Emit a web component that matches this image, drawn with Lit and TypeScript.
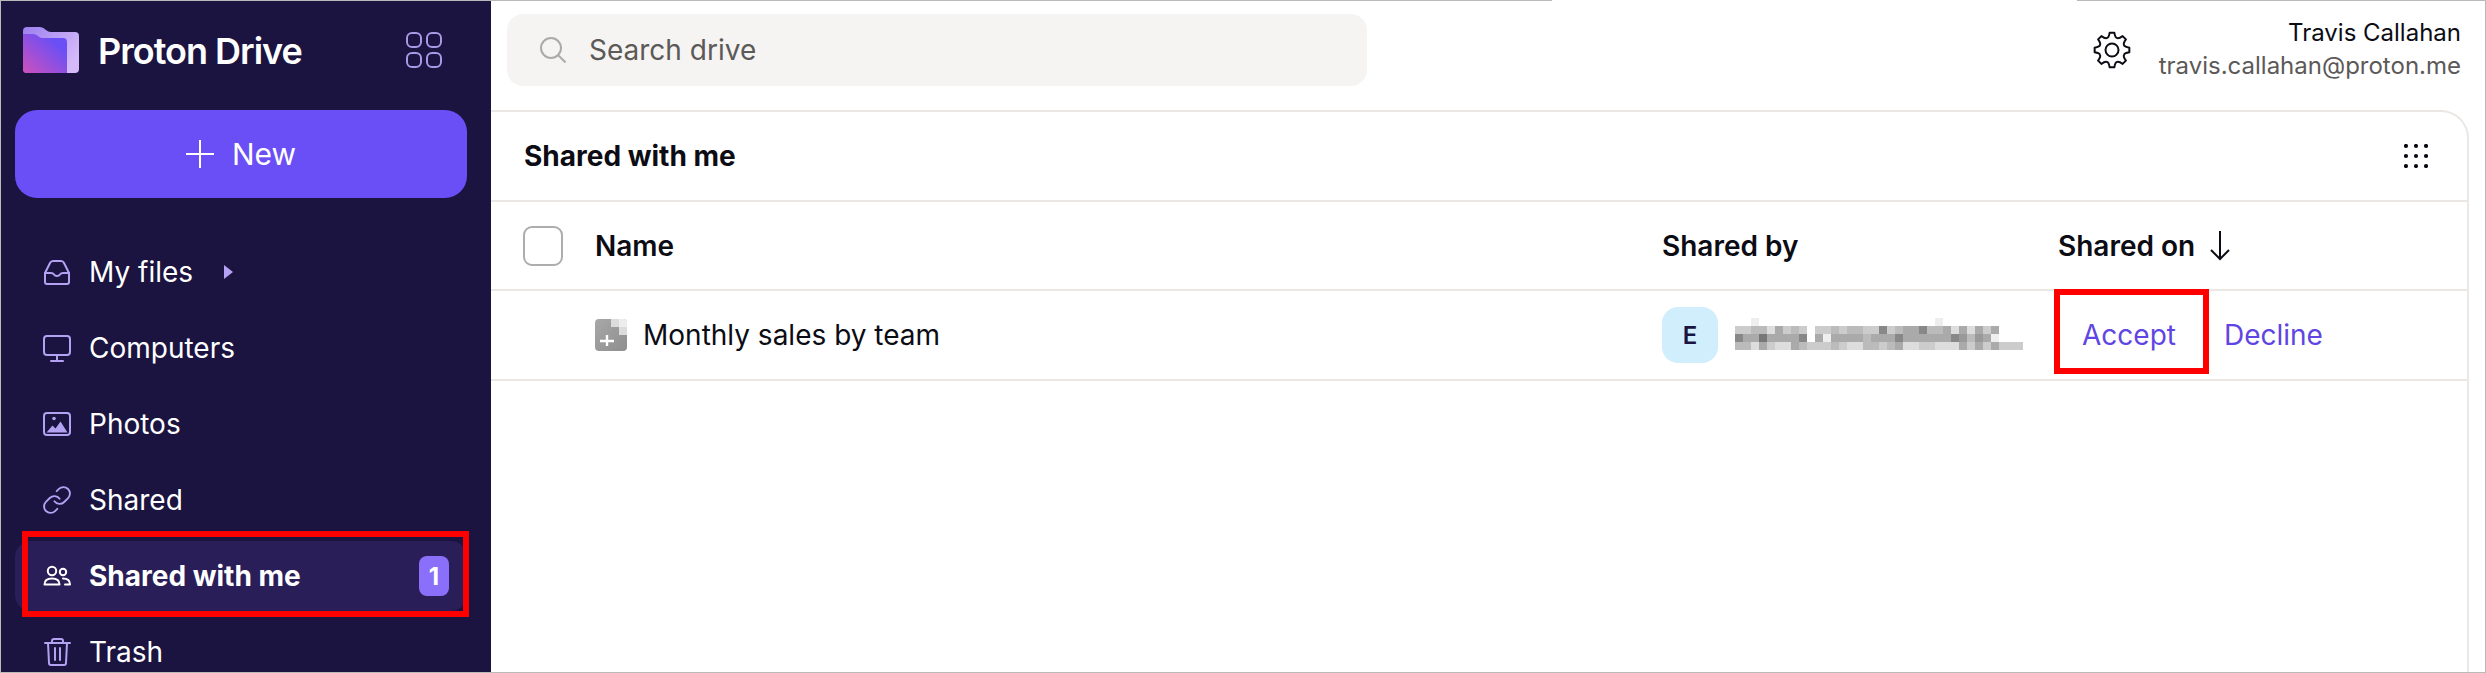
import { LitElement, html, css, svg } from 'lit';
import { customElement } from 'lit/decorators.js';

// grey levels of the pixelated address, one hex digit per 8px cell
const MOSAIC = [
  'ffeffffffffffffffffffffffeffffffffff',
  'ccbbdacbcfccbcbbcc8cbaa8bbadadacafff',
  '8aa7aaaa8faeaaaabaaa8aaaaaa89b9aefff',
  'bbdacddabcccbcddbbcbaddccdddacacaccc',
];

// cog outline, built from polar points so the teeth stay even
function cogPath(cx: number, cy: number, outer: number, inner: number, teeth: number) {
  const pts: string[] = [];
  const step = (Math.PI * 2) / teeth;
  for (let i = 0; i < teeth; i++) {
    const a = i * step - Math.PI / 2;
    const at = (r: number, d: number) =>
      `${(cx + r * Math.cos(a + d * step)).toFixed(2)} ${(cy + r * Math.sin(a + d * step)).toFixed(2)}`;
    pts.push(`${i === 0 ? 'M' : 'L'}${at(outer, -0.17)}`);
    pts.push(`L${at(outer, 0.17)}`);
    pts.push(`Q${at(inner * 0.98, 0.32)} ${at(inner, 0.5)}`);
    pts.push(`Q${at(inner * 0.98, 0.68)} ${at(outer, 0.83)}`);
  }
  return pts.join(' ') + 'Z';
}

const ICONS: Record<string, unknown> = {
  inbox: svg`<path d="M2 15 7 5Q8 3 10 3H18Q20 3 21 5L26 15V24Q26 26 24 26H4Q2 26 2 24Z"/><path d="M2 15H8Q10 15 11 16.5 12 18 14 18 16 18 17 16.5 18 15 20 15H26"/>`,
  monitor: svg`<rect x="1" y="2" width="26" height="19" rx="3"/><path d="M14 21V27M8 27H20"/>`,
  photo: svg`<rect x="1" y="3" width="26" height="22" rx="3"/><circle cx="11" cy="8.5" r="1.8" class="solid"/><path class="solid" d="M3.5 22.5 9.5 15.5 12.5 18.5 17.5 11.5 24.5 22.5Z"/>`,
  link: svg`<g stroke-width="1.45" transform="translate(-1.6 -1.6) scale(1.3)"><path d="M10 13a5 5 0 0 0 7.54.54l3-3a5 5 0 0 0-7.07-7.07l-1.72 1.71"/><path d="M14 11a5 5 0 0 0-7.54-.54l-3 3a5 5 0 0 0 7.07 7.07l1.71-1.71"/></g>`,
  people: svg`<circle cx="9" cy="9" r="4.2"/><circle cx="20" cy="10" r="3.2"/><path d="M1.5 22.5C1.5 18 4.5 16.5 9 16.5S16.5 18 16.5 22.5Z"/><path d="M20 16.5C24 16.5 27 18 27 22.5H22"/>`,
  trash: svg`<path d="M2 5H27M9 5V3Q9 1 11 1H18Q20 1 20 3V5M5 5 6 25Q6 27 8 27H21Q23 27 23 25L24 5M12 10V22M17 10V22"/>`,
};

@customElement('app-root')
export class AppRoot extends LitElement {
  static styles = css`
    :host {
      display: block;
      height: 673px;
      overflow: hidden;
      background: #fff;
      font-family: Inter, 'Liberation Sans', sans-serif;
      color: #0c0c14;
    }
    .topline {
      display: flex;
      height: 1px;
    }
    .topline .seg {
      background: #b9b9b9;
    }
    .topline .left {
      width: 1552px;
    }
    .topline .gap {
      width: 525px;
    }
    .topline .right {
      flex: 1;
    }
    .shell {
      display: flex;
      height: 671px;
      border-left: 1px solid #b9b9b9;
      border-right: 1px solid #b9b9b9;
      border-bottom: 1px solid #b9b9b9;
      overflow: hidden;
    }

    /* sidebar */
    .sidebar {
      width: 490px;
      flex: none;
      background: #1b1340;
      box-sizing: border-box;
      padding: 0 24px 0 14px;
      color: #fff;
    }
    .brand {
      display: flex;
      align-items: center;
      height: 109px;
      padding-left: 8px;
    }
    .logo {
      width: 56px;
      height: 46px;
      flex: none;
      margin-top: -11px;
    }
    .wordmark {
      margin: -9px 0 0 19px;
      font-size: 36px;
      font-weight: 600;
      letter-spacing: -1px;
      line-height: 1;
      white-space: nowrap;
    }
    .apps {
      width: 36px;
      height: 36px;
      margin: -11px 0 0 auto;
      margin-right: 25px;
      fill: none;
      stroke: #a898e6;
      stroke-width: 2;
    }
    .new-btn {
      display: flex;
      align-items: center;
      justify-content: center;
      gap: 18px;
      height: 88px;
      border-radius: 22px;
      background: #6a4ff6;
      font-size: 30px;
    }
    .new-btn svg {
      width: 28px;
      height: 28px;
      stroke: #fff;
      stroke-width: 2;
    }
    .nav {
      display: flex;
      flex-direction: column;
      gap: 6px;
      margin-top: 39px;
    }
    .nav-item {
      position: relative;
      display: flex;
      align-items: center;
      flex: none;
      gap: 18px;
      height: 70px;
      padding: 0 18px 0 28px;
      border-radius: 16px;
      font-size: 28px;
    }
    .nav-item svg.icon {
      width: 28px;
      height: 28px;
      flex: none;
      fill: none;
      stroke: #b3a1f2;
      stroke-width: 2;
      stroke-linecap: round;
      stroke-linejoin: round;
    }
    .nav-item svg.icon .solid {
      fill: #b3a1f2;
      stroke: none;
    }
    .nav-item.active {
      background: #2a1e59;
      font-weight: 700;
    }
    .nav-item.active svg.icon {
      stroke: #fff;
    }
    .caret {
      width: 0;
      height: 0;
      margin-left: 13px;
      border-left: 9px solid #b3a1f2;
      border-top: 7px solid transparent;
      border-bottom: 7px solid transparent;
    }
    .badge {
      margin-left: auto;
      width: 30px;
      height: 40px;
      border-radius: 8px;
      background: #8a6ffa;
      display: flex;
      align-items: center;
      justify-content: center;
      font-size: 24px;
      font-weight: 700;
    }
    .callout {
      position: absolute;
      border: 6px solid #ff0000;
      box-sizing: border-box;
      pointer-events: none;
    }
    .nav-item .callout {
      left: 7px;
      top: -10px;
      width: 447px;
      height: 86px;
    }

    /* main column */
    .main {
      flex: 1;
      min-width: 0;
      display: flex;
      flex-direction: column;
    }
    .topbar {
      display: flex;
      align-items: flex-start;
      height: 109px;
      flex: none;
      padding: 13px 24px 0 16px;
      box-sizing: border-box;
    }
    .search {
      display: flex;
      align-items: center;
      gap: 23px;
      width: 860px;
      height: 72px;
      padding-left: 33px;
      box-sizing: border-box;
      border-radius: 16px;
      background: #f5f4f2;
      color: #5c5958;
      font-size: 28px;
    }
    .search svg {
      width: 26px;
      height: 26px;
      fill: none;
      stroke: #acaaa8;
      stroke-width: 2;
    }
    .gear {
      width: 38px;
      height: 38px;
      margin: 17px 0 0 auto;
      fill: none;
      stroke: #0c0c14;
      stroke-width: 2;
      stroke-linejoin: round;
    }
    .user {
      margin: 2px 0 0 28px;
      text-align: right;
      font-size: 24px;
      line-height: 33px;
    }
    .user .mail {
      color: #5c5958;
    }
    .card {
      flex: 1;
      margin-right: 16px;
      border-top: 2px solid #eae7e4;
      border-right: 2px solid #eae7e4;
      border-top-right-radius: 28px;
    }
    .card-head {
      display: flex;
      align-items: center;
      justify-content: space-between;
      height: 88px;
      padding: 0 39px 0 33px;
      font-size: 28px;
      font-weight: 700;
    }
    .dots {
      width: 24px;
      height: 24px;
      fill: #0c0c14;
    }
    .row {
      display: grid;
      grid-template-columns: 104px 1067px 396px 1fr;
      align-items: center;
      border-top: 2px solid #eae7e4;
      height: 88px;
      font-size: 28px;
    }
    .row.head {
      height: 87px;
      font-weight: 600;
    }
    .row.data {
      border-bottom: 2px solid #eae7e4;
    }
    .check {
      width: 40px;
      height: 40px;
      margin-left: 32px;
      box-sizing: border-box;
      border: 2px solid #adadad;
      border-radius: 9px;
    }
    .sort {
      display: flex;
      align-items: center;
      gap: 14px;
    }
    .sort svg {
      width: 22px;
      height: 30px;
      fill: none;
      stroke: #0c0c14;
      stroke-width: 2;
    }
    .file {
      display: flex;
      align-items: center;
      gap: 16px;
    }
    .file svg {
      width: 32px;
      height: 32px;
      flex: none;
    }
    .owner {
      display: flex;
      align-items: center;
      gap: 17px;
    }
    .avatar {
      width: 56px;
      height: 56px;
      flex: none;
      border-radius: 16px;
      background: #d1eefd;
      color: #1b1340;
      font-size: 24px;
      font-weight: 600;
      display: flex;
      align-items: center;
      justify-content: center;
    }
    .mosaic {
      display: grid;
      grid-template-columns: repeat(36, 8px);
      grid-auto-rows: 8px;
      margin-top: -2px;
    }
    .actions {
      position: relative;
      display: flex;
      gap: 48px;
      padding-left: 24px;
      color: #5f45e2;
    }
    .actions .callout {
      left: -4px;
      top: -29px;
      width: 155px;
      height: 85px;
    }
  `;

  private navItems = [
    { label: 'My files', icon: 'inbox', caret: true },
    { label: 'Computers', icon: 'monitor' },
    { label: 'Photos', icon: 'photo' },
    { label: 'Shared', icon: 'link' },
    { label: 'Shared with me', icon: 'people', active: true, badge: 1 },
    { label: 'Trash', icon: 'trash' },
  ];

  private renderNavItem(item: { label: string; icon: string; caret?: boolean; active?: boolean; badge?: number }) {
    return html`
      <div class="nav-item ${item.active ? 'active' : ''}">
        <svg class="icon" viewBox="0 0 28 28">${ICONS[item.icon]}</svg>
        <span>${item.label}</span>
        ${item.caret ? html`<span class="caret"></span>` : ''}
        ${item.badge ? html`<span class="badge">${item.badge}</span>` : ''}
        ${item.active ? html`<div class="callout"></div>` : ''}
      </div>
    `;
  }

  private renderLogo() {
    return html`
      <svg class="logo" viewBox="0 0 56 46">
        <defs>
          <linearGradient id="back" x1="0" y1="0" x2="1" y2="0.6">
            <stop offset="0" stop-color="#9d7ff0" />
            <stop offset="1" stop-color="#d4baf9" />
          </linearGradient>
          <linearGradient id="front" x1="0" y1="1" x2="0.9" y2="0.1">
            <stop offset="0" stop-color="#cf50bb" />
            <stop offset="0.85" stop-color="#6a4ff6" />
          </linearGradient>
        </defs>
        <path fill="url(#back)" d="M0 4Q0 0 4 0H17Q20 0 23 3 25 5 28 5H52Q56 5 56 9V42Q56 46 52 46H4Q0 46 0 42Z" />
        <path fill="url(#front)" d="M0 7H10Q13 7 15 9 17 11 19 11H40Q44 11 44 15V46H4Q0 46 0 42Z" />
      </svg>
    `;
  }

  render() {
    return html`
      <div class="topline">
        <div class="seg left"></div>
        <div class="gap"></div>
        <div class="seg right"></div>
      </div>
      <div class="shell">
        <aside class="sidebar">
          <div class="brand">
            ${this.renderLogo()}
            <span class="wordmark">Proton Drive</span>
            <svg class="apps" viewBox="0 0 36 36">
              <rect x="1" y="1" width="14" height="14" rx="5" />
              <rect x="21" y="1" width="14" height="14" rx="5" />
              <rect x="1" y="21" width="14" height="14" rx="5" />
              <rect x="21" y="21" width="14" height="14" rx="5" />
            </svg>
          </div>
          <div class="new-btn">
            <svg viewBox="0 0 28 28"><path d="M14 0V28M0 14H28" /></svg>
            <span>New</span>
          </div>
          <nav class="nav">${this.navItems.map((i) => this.renderNavItem(i))}</nav>
        </aside>
        <main class="main">
          <header class="topbar">
            <div class="search">
              <svg viewBox="0 0 26 26"><circle cx="11" cy="11" r="10" /><path d="M18 18 25.5 25.5" /></svg>
              <span>Search drive</span>
            </div>
            <svg class="gear" viewBox="0 0 38 38">
              <path d="${cogPath(19, 19, 17.5, 13, 8)}" />
              <circle cx="19" cy="19" r="6.5" />
            </svg>
            <div class="user">
              <div>Travis Callahan</div>
              <div class="mail">travis.callahan@proton.me</div>
            </div>
          </header>
          <section class="card">
            <div class="card-head">
              <span>Shared with me</span>
              <svg class="dots" viewBox="0 0 24 24">
                ${[2, 12, 22].map((y) =>
                  [2, 12, 22].map((x) => svg`<circle cx="${x}" cy="${y}" r="2.1" />`),
                )}
              </svg>
            </div>
            <div class="row head">
              <div class="check"></div>
              <div>Name</div>
              <div>Shared by</div>
              <div class="sort">
                <span>Shared on</span>
                <svg viewBox="0 0 22 30"><path d="M11 0V28M2 19 11 28 20 19" /></svg>
              </div>
            </div>
            <div class="row data">
              <div></div>
              <div class="file">
                <svg viewBox="0 0 32 32">
                  <defs>
                    <linearGradient id="sheet" x1="0" y1="0" x2="1" y2="1">
                      <stop offset="0" stop-color="#a8a8a8" />
                      <stop offset="1" stop-color="#8e8e8e" />
                    </linearGradient>
                  </defs>
                  <rect width="32" height="32" rx="4" fill="url(#sheet)" />
                  <path fill="#dcdcdc" d="M16 0H28Q32 0 32 4V16H24V8H16Z" />
                  <path fill="#ededed" d="M24 0H28Q32 0 32 4V8H24Z" />
                  <path stroke="#fff" stroke-width="2.4" d="M5 22H19M12 16V27" />
                </svg>
                <span>Monthly sales by team</span>
              </div>
              <div class="owner">
                <div class="avatar">E</div>
                <div class="mosaic">
                  ${MOSAIC.flatMap((row) =>
                    [...row].map((c) => html`<span style="background:#${c}${c}${c}"></span>`),
                  )}
                </div>
              </div>
              <div class="actions">
                <span>Accept</span>
                <span>Decline</span>
                <div class="callout"></div>
              </div>
            </div>
          </section>
        </main>
      </div>
    `;
  }
}
